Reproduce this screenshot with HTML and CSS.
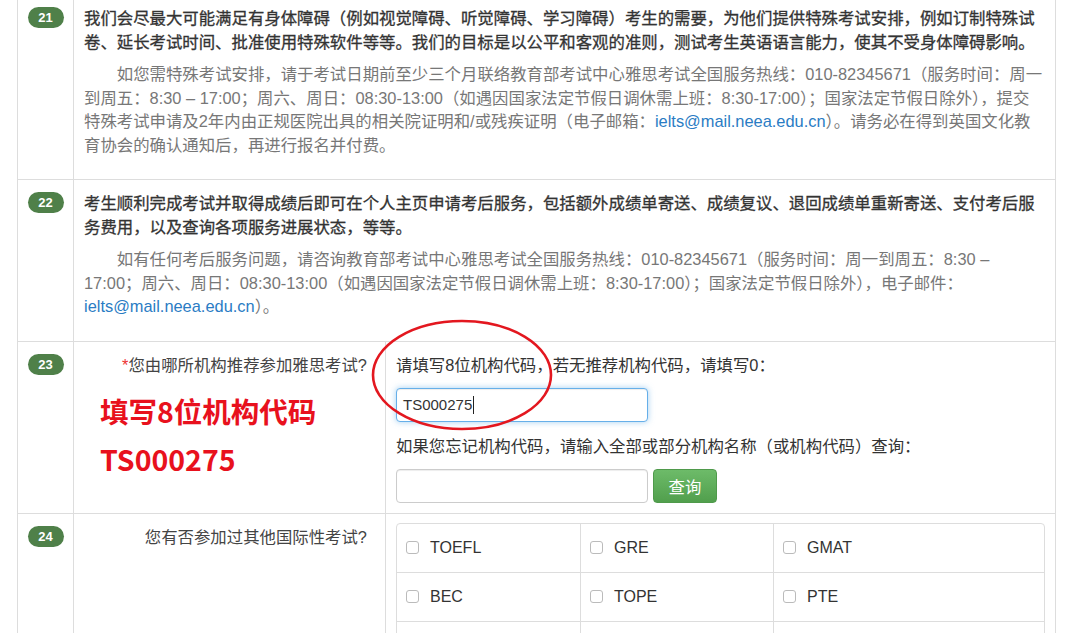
FILE: index.html
```html
<!DOCTYPE html>
<html lang="zh-CN">
<head>
<meta charset="utf-8">
<title>雅思考试报名</title>
<link rel="stylesheet" href="styles.css">
</head>
<body>
<div class="page">
  <div class="form-table">
    <div class="row wide">
      <div class="cell num"><span class="badge">21</span></div>
      <div class="cell body">
        <p class="lead">我们会尽最大可能满足有身体障碍（例如视觉障碍、听觉障碍、学习障碍）考生的需要，为他们提供特殊考试安排，例如订制特殊试<br>卷、延长考试时间、批准使用特殊软件等等。我们的目标是以公平和客观的准则，测试考生英语语言能力，使其不受身体障碍影响。</p>
        <p class="note">如您需特殊考试安排，请于考试日期前至少三个月联络教育部考试中心雅思考试全国服务热线：010-82345671（服务时间：周一<br>到周五：8:30 – 17:00；周六、周日：08:30-13:00（如遇因国家法定节假日调休需上班：8:30-17:00）；国家法定节假日除外），提交<br>特殊考试申请及2年内由正规医院出具的相关院证明和/或残疾证明（电子邮箱：<a class="link">ielts@mail.neea.edu.cn</a>）。请务必在得到英国文化教<br>育协会的确认通知后，再进行报名并付费。</p>
      </div>
    </div>
    <div class="row wide">
      <div class="cell num"><span class="badge">22</span></div>
      <div class="cell body">
        <p class="lead">考生顺利完成考试并取得成绩后即可在个人主页申请考后服务，包括额外成绩单寄送、成绩复议、退回成绩单重新寄送、支付考后服<br>务费用，以及查询各项服务进展状态，等等。</p>
        <p class="note">如有任何考后服务问题，请咨询教育部考试中心雅思考试全国服务热线：010-82345671（服务时间：周一到周五：8:30 –<br>17:00；周六、周日：08:30-13:00（如遇因国家法定节假日调休需上班：8:30-17:00）；国家法定节假日除外），电子邮件：<br><a class="link">ielts@mail.neea.edu.cn</a>）。</p>
      </div>
    </div>
    <div class="row">
      <div class="cell num"><span class="badge">23</span></div>
      <div class="cell label">
        <div class="label-text"><span class="req">*</span>您由哪所机构推荐参加雅思考试?</div>
        <div class="annot">填写8位机构代码<br>TS000275</div>
      </div>
      <div class="cell field">
        <p class="hint">请填写8位机构代码，若无推荐机构代码，请填写0：</p>
        <div class="input focused">TS000275<span class="caret"></span></div>
        <p class="hint">如果您忘记机构代码，请输入全部或部分机构名称（或机构代码）查询：</p>
        <div class="search">
          <div class="input"></div>
          <button class="btn" type="button">查询</button>
        </div>
      </div>
    </div>
    <div class="row">
      <div class="cell num"><span class="badge">24</span></div>
      <div class="cell label">
        <div class="label-text">您有否参加过其他国际性考试?</div>
      </div>
      <div class="cell field exams-cell">
        <div class="exams">
          <label class="exam"><span class="box"></span>TOEFL</label>
          <label class="exam"><span class="box"></span>GRE</label>
          <label class="exam"><span class="box"></span>GMAT</label>
          <label class="exam"><span class="box"></span>BEC</label>
          <label class="exam"><span class="box"></span>TOPE</label>
          <label class="exam"><span class="box"></span>PTE</label>
          <div class="exam"></div>
          <div class="exam"></div>
          <div class="exam"></div>
        </div>
      </div>
    </div>
  </div>
  <svg class="circle" width="192" height="118" viewBox="0 0 192 118" aria-hidden="true">
    <ellipse cx="96" cy="57" rx="89" ry="54" fill="none" stroke="#e3171f" stroke-width="2.6"/>
  </svg>
</div>
</body>
</html>
```

FILE: styles.css
```css
* { box-sizing: border-box; }

body {
  margin: 0;
  background: #fff;
  font-family: "Liberation Sans", "Noto Sans CJK SC", sans-serif;
  font-size: 16.4px;
  color: #333;
}

.page {
  position: relative;
  height: 633px;
  overflow: hidden;
}

.form-table {
  margin: -5px 0 0 17px;
  width: 1039px;
  border-left: 1px solid #ddd;
}

.row {
  display: grid;
  grid-template-columns: 56px 312px 1fr;
  border-bottom: 1px solid #ddd;
}

.row.wide {
  grid-template-columns: 56px 1fr;
}

.cell {
  border-right: 1px solid #ddd;
  padding: 11px 10px 11px 10px;
}

.num {
  text-align: center;
  padding: 12px 0 0;
}

.badge {
  display: inline-block;
  width: 36px;
  height: 21px;
  line-height: 21px;
  border-radius: 11px;
  background: #4f8049;
  color: #fff;
  font-weight: bold;
  font-size: 13px;
}

.body p { margin: 0; }

.lead {
  font-weight: normal;
  -webkit-text-stroke: 0.3px #333;
  line-height: 24px;
  color: #333;
}

.body .lead { margin-bottom: 9px; }

.body .note {
  line-height: 23.5px;
  color: #777;
  text-indent: 2em;
  margin-bottom: 11px;
}

.link { color: #2a7cc4; }

.label {
  padding-right: 18px;
}

.label-text {
  text-align: right;
  line-height: 24px;
  color: #444;
}

.req { color: #e33; }

.annot {
  margin-top: 10px;
  padding-left: 16px;
  line-height: 48px;
  font-size: 28.5px;
  font-weight: bold;
  color: #e8111d;
  font-family: "Noto Sans CJK SC", "Liberation Sans", sans-serif;
}

.field {
  padding: 11px 10px 10px 10px;
}

.exams-cell {
  padding-top: 9px;
}

.hint {
  margin: 0 0 11px;
  line-height: 24px;
  color: #333;
}

.input {
  width: 252px;
  height: 34px;
  border: 1px solid #ccc;
  border-radius: 4px;
  padding: 0 6px;
  display: flex;
  align-items: center;
  font-size: 15px;
  color: #333;
  background: #fff;
  box-shadow: inset 0 1px 1px rgba(0, 0, 0, 0.075);
}

.input.focused {
  border-color: #66afe9;
  box-shadow: inset 0 1px 1px rgba(0, 0, 0, 0.075), 0 0 6px rgba(102, 175, 233, 0.6);
  margin-bottom: 12px;
}

.caret {
  display: inline-block;
  width: 1px;
  height: 18px;
  background: #222;
  margin-left: 1px;
}

.search {
  display: flex;
  gap: 5px;
}

.btn {
  width: 64px;
  height: 34px;
  border: 1px solid #4f9a4b;
  border-radius: 4px;
  background: linear-gradient(#6dbb69, #519f4d);
  color: #fff;
  font-family: "Liberation Sans", "Noto Sans CJK SC", sans-serif;
  font-size: 16.4px;
  padding: 0;
}

.exams {
  display: grid;
  grid-template-columns: 184px 193px 1fr;
  border: 1px solid #ddd;
  border-radius: 4px;
}

.exam {
  height: 49px;
  display: flex;
  align-items: center;
  padding-left: 9px;
  border-right: 1px solid #ddd;
  border-bottom: 1px solid #ddd;
  font-size: 16px;
  color: #333;
}

.exam:nth-child(3n) { border-right: none; }

.box {
  width: 13px;
  height: 13px;
  border: 1px solid #bbb;
  border-radius: 3px;
  margin-right: 11px;
  background: #fff;
}

.circle {
  position: absolute;
  left: 366px;
  top: 318px;
}
```
